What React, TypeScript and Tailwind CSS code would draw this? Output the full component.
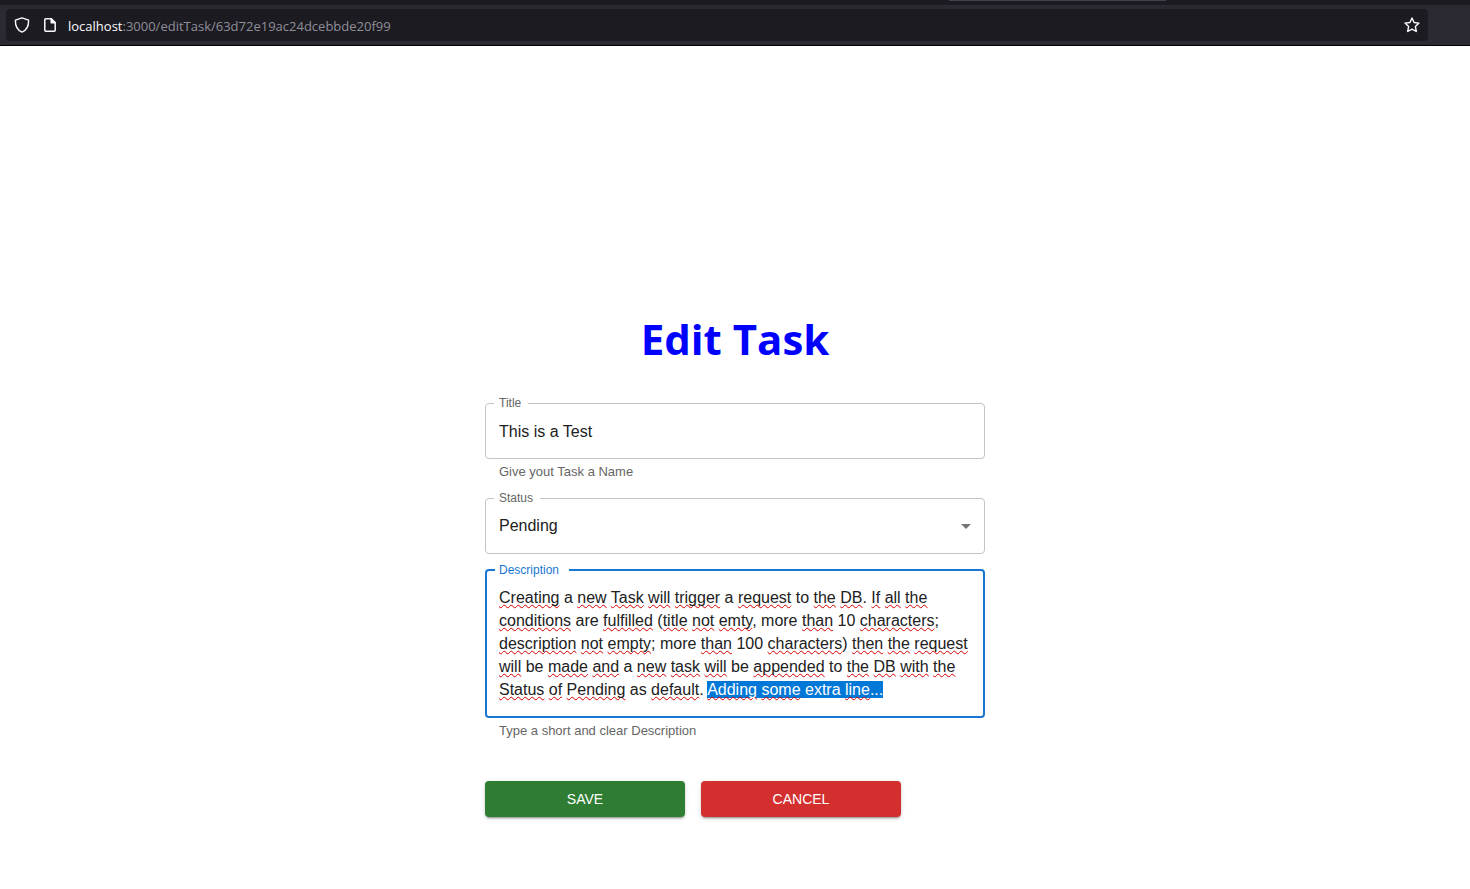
import { useEffect, useRef, useState } from "react";
import type { ReactNode } from "react";

const TASK_ID = "63d72e19ac24dcebbde20f99";

const SELECTED = "Adding some extra line...";

const DESCRIPTION =
  "Creating a new Task will trigger a request to the DB. If all the conditions are fulfilled (title not emty, more than 10 characters; description not empty; more than 100 characters) then the request will be made and a new task will be appended to the DB with the Status of Pending as default. " +
  SELECTED;

const KNOWN_WORDS = new Set(["a", "to", "are", "more", "be", "as", "extra"]);

function BrowserBar() {
  return (
    <header className="border-b border-black bg-[#2b2a33]">
      <div className="flex h-[5px] bg-[#1c1b22]">
        <div className="ml-[949px] h-px w-[217px] bg-[#42414d]" />
      </div>
      <div className="flex py-1 pr-[42px] pl-[6px]">
        <div className="flex h-8 flex-1 items-center rounded bg-[#1c1b22] px-2">
          <svg className="size-4" viewBox="0 0 16 16" fill="none" stroke="#fbfbfe" strokeWidth="1.4" strokeLinejoin="round">
            <path d="M8 .9 14.6 3.2C14.8 8.6 12.8 13 8 15.1 3.2 13 1.2 8.6 1.4 3.2Z" />
          </svg>
          <svg className="ml-3 size-4" viewBox="0 0 16 16" fill="none" stroke="#fbfbfe" strokeWidth="1.5" strokeLinejoin="round">
            <path d="M3.8 1.8H9.3L13.2 5.6V13.2a1 1 0 0 1-1 1H3.8a1 1 0 0 1-1-1V2.8a1 1 0 0 1 1-1Z" />
            <path d="M9.2 2V5.7H13Z" fill="#fbfbfe" />
          </svg>
          <p className="ml-[10px] flex-1 pt-0.5 font-['Open_Sans','Noto_Sans',sans-serif] text-[13px] leading-5 text-[#8f8f98]">
            <span className="text-[#fbfbfe]">localhost</span>:3000/editTask/{TASK_ID}
          </p>
          <button type="button" aria-label="Bookmark this page">
            <svg className="size-4" viewBox="0 0 16 16" fill="none" stroke="#fbfbfe" strokeWidth="1.4" strokeLinejoin="round">
              <path d="M8 1.1 10.1 5.5 15 6.1 11.4 9.6 12.3 14.5 8 12.2 3.7 14.5 4.6 9.6 1 6.1 5.9 5.5Z" />
            </svg>
          </button>
        </div>
      </div>
    </header>
  );
}

function Field({ id, label, active, children }: { id: string; label: string; active?: boolean; children: ReactNode }) {
  return (
    <fieldset className={active ? "rounded border-2 border-[#1976d2]" : "rounded border border-[#c4c4c4]"}>
      <legend
        className={
          active
            ? "ml-2 h-3 pr-[10px] pl-1 text-xs leading-3 text-[#1976d2]"
            : "ml-2 h-3 pr-[7px] pl-[5px] text-xs leading-3 text-[#666666]"
        }
      >
        <label htmlFor={id}>{label}</label>
      </legend>
      {children}
    </fieldset>
  );
}

function Words({ text }: { text: string }) {
  return text.split(/([A-Za-z]+)/).map((part, i) =>
    /^[A-Za-z]+$/.test(part) && !KNOWN_WORDS.has(part) ? (
      <span
        key={i}
        className="underline decoration-[#d70000] decoration-wavy decoration-1 underline-offset-1 [text-decoration-skip-ink:none]"
      >
        {part}
      </span>
    ) : (
      part
    ),
  );
}

function TextMarks({ text, start, end }: { text: string; start: number; end: number }) {
  return (
    <div
      aria-hidden="true"
      className="pointer-events-none absolute inset-0 px-3 whitespace-pre-wrap text-transparent"
    >
      <Words text={text.slice(0, start)} />
      <span className="bg-[#0078d7]">
        <Words text={text.slice(start, end)} />
      </span>
      <Words text={text.slice(end)} />
    </div>
  );
}

export default function App() {
  const [title, setTitle] = useState("This is a Test");
  const [status, setStatus] = useState("Pending");
  const [description, setDescription] = useState(DESCRIPTION);
  const [range, setRange] = useState([DESCRIPTION.length - SELECTED.length, DESCRIPTION.length]);
  const area = useRef<HTMLTextAreaElement>(null);

  useEffect(() => {
    area.current?.focus();
    area.current?.setSelectionRange(DESCRIPTION.length - SELECTED.length, DESCRIPTION.length);
  }, []);

  return (
    <div className="min-h-screen bg-white font-['Liberation_Sans',Arial,sans-serif] text-[#212121]">
      <BrowserBar />
      <main className="mx-auto max-w-[500px] pt-[259px] pb-[72px]">
        <h1 className="text-center font-['Open_Sans','Noto_Sans',sans-serif] text-[42px] leading-[68px] font-bold text-[#0000ff]">
          Edit Task
        </h1>
        <form className="mt-6" onSubmit={(e) => e.preventDefault()}>
          <Field id="title" label="Title">
            <input
              id="title"
              value={title}
              onChange={(e) => setTitle(e.target.value)}
              className="block h-[49px] w-full bg-transparent px-[13px] pb-[3px] text-base outline-none"
            />
          </Field>
          <p className="mt-1 mb-[11px] px-[14px] text-[13px] leading-[18px] text-[#666666]">Give yout Task a Name</p>
          <Field id="status" label="Status">
            <div className="flex items-center">
              <select
                id="status"
                value={status}
                onChange={(e) => setStatus(e.target.value)}
                className="h-[49px] flex-1 appearance-none bg-transparent px-[13px] pb-[5px] text-base outline-none"
              >
                <option>Pending</option>
                <option>In Progress</option>
                <option>Completed</option>
              </select>
              <svg className="pointer-events-none mr-[6px] mb-1.5 -ml-8 size-6" viewBox="0 0 24 24" fill="#757575">
                <path d="m7 10 5 5 5-5z" />
              </svg>
            </div>
          </Field>
          <div className="mt-[10px]">
            <Field id="description" label="Description" active>
              <div className="relative mt-[10px] mb-[15px] text-base leading-[23px]">
                <TextMarks text={description} start={range[0]} end={range[1]} />
                <textarea
                  id="description"
                  ref={area}
                  rows={5}
                  spellCheck={false}
                  value={description}
                  onChange={(e) => setDescription(e.target.value)}
                  onSelect={(e) => setRange([e.currentTarget.selectionStart, e.currentTarget.selectionEnd])}
                  className="relative block w-full resize-none overflow-hidden bg-transparent px-3 outline-none selection:bg-transparent selection:text-white"
                />
              </div>
            </Field>
          </div>
          <p className="mt-1 px-[14px] text-[13px] leading-[18px] text-[#666666]">Type a short and clear Description</p>
          <div className="mt-[41px] flex gap-4">
            <button
              type="submit"
              className="h-9 w-[200px] rounded bg-[#2e7d32] text-sm text-white shadow-[0_3px_1px_-2px_rgba(0,0,0,0.2),0_2px_2px_0_rgba(0,0,0,0.14),0_1px_5px_0_rgba(0,0,0,0.12)]"
            >
              SAVE
            </button>
            <button
              type="button"
              className="h-9 w-[200px] rounded bg-[#d32f2f] text-sm text-white shadow-[0_3px_1px_-2px_rgba(0,0,0,0.2),0_2px_2px_0_rgba(0,0,0,0.14),0_1px_5px_0_rgba(0,0,0,0.12)]"
            >
              CANCEL
            </button>
          </div>
        </form>
      </main>
    </div>
  );
}
